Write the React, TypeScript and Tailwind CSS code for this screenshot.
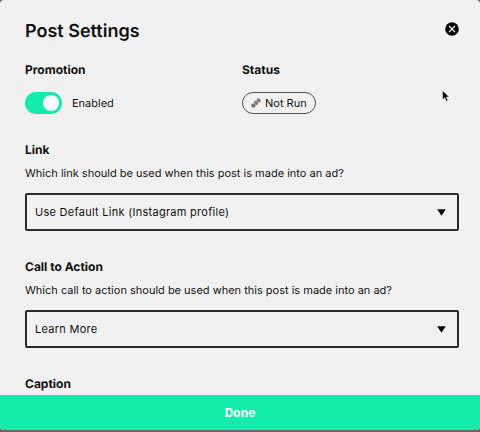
import { useState, type ReactNode } from "react";

const LINK_OPTIONS = ["Use Default Link (Instagram profile)", "Use Custom Link"];
const CTA_OPTIONS = ["Learn More", "Shop Now", "Sign Up"];

type SelectFieldProps = {
  id: string;
  label: string;
  hint: string;
  options: string[];
};

function Heading({ children }: { children: ReactNode }) {
  return <h2 className="text-[12px] leading-4 font-bold">{children}</h2>;
}

function SelectField({ id, label, hint, options }: SelectFieldProps) {
  const [value, setValue] = useState(options[0]);

  return (
    <section className="flex flex-col">
      <label htmlFor={id} className="text-[12px] leading-4 font-bold">
        {label}
      </label>
      <p className="mt-[7px] text-[11px] leading-4">{hint}</p>
      <div className="mt-3 grid items-center">
        <select
          id={id}
          value={value}
          onChange={(e) => setValue(e.target.value)}
          className="col-start-1 row-start-1 h-[38px] w-full appearance-none rounded-xs border-2 border-[#2b2b2b] bg-transparent pr-8 pl-2 text-[11px] tracking-wide"
        >
          {options.map((option) => (
            <option key={option}>{option}</option>
          ))}
        </select>
        <svg
          viewBox="0 0 9 7"
          className="pointer-events-none col-start-1 row-start-1 mr-[13px] h-[7px] w-[9px] justify-self-end"
          aria-hidden="true"
        >
          <path d="M.2.2h8.6L4.5 6.8z" fill="#0a0a0a" />
        </svg>
      </div>
    </section>
  );
}

function Pointer() {
  return (
    <svg
      viewBox="0 0 8 13"
      className="pointer-events-none absolute top-[90px] left-[442px] h-[13px] w-2"
      aria-hidden="true"
    >
      <path
        d="M.5.5v9.2l2.2-2 1.5 3.6 1.7-.7-1.5-3.5h2.9z"
        fill="#0a0a0a"
        stroke="#ffffff"
        strokeWidth=".5"
      />
    </svg>
  );
}

export default function App() {
  const [enabled, setEnabled] = useState(true);

  return (
    <div className="h-screen bg-[#666666] pb-[2px] font-['Inter',sans-serif] text-[#111111] [text-rendering:geometricPrecision]">
      <main className="relative flex h-full flex-col overflow-hidden rounded-sm bg-[#f1f1f1]">
        <div className="min-h-0 flex-1 overflow-hidden pt-5 pr-[21px] pl-[25px]">
          <header className="flex items-start justify-between">
            <h1 className="text-[18px] leading-6 font-semibold">Post Settings</h1>
            <button type="button" aria-label="Close" className="mt-[2px]">
              <svg viewBox="0 0 14 14" className="size-[14px]" aria-hidden="true">
                <circle cx="7" cy="7" r="6.8" fill="#0a0a0a" />
                <path d="M4 4l6 6M10 4l-6 6" stroke="#f1f1f1" strokeWidth="1.1" />
              </svg>
            </button>
          </header>

          <div className="mt-[18px] grid grid-cols-2">
            <section>
              <Heading>Promotion</Heading>
              <label className="mt-[14px] flex h-[22px] items-center gap-[10px] text-[11px]">
                <input
                  type="checkbox"
                  role="switch"
                  checked={enabled}
                  onChange={(e) => setEnabled(e.target.checked)}
                  className="flex h-[22px] w-[37px] appearance-none items-center rounded-full bg-[#b5b5b5] px-[3px] before:size-4 before:rounded-full before:bg-white checked:justify-end checked:bg-[#13edab]"
                />
                Enabled
              </label>
            </section>
            <section>
              <Heading>Status</Heading>
              <div className="mt-[14px] flex h-[22px] w-fit items-center gap-1 rounded-full border border-[#555555] px-2 text-[11px]">
                <svg viewBox="0 0 10 10" className="size-[10px]" aria-hidden="true">
                  <g fill="#777777" stroke="#f1f1f1" strokeWidth=".4">
                    <circle cx="7.6" cy="2.4" r="2.2" />
                    <circle cx="5" cy="5" r="2.4" />
                    <circle cx="2.4" cy="7.6" r="2.4" />
                  </g>
                </svg>
                Not Run
              </div>
            </section>
          </div>

          <div className="mt-7 flex flex-col gap-7">
            <SelectField
              id="link"
              label="Link"
              hint="Which link should be used when this post is made into an ad?"
              options={LINK_OPTIONS}
            />
            <SelectField
              id="cta"
              label="Call to Action"
              hint="Which call to action should be used when this post is made into an ad?"
              options={CTA_OPTIONS}
            />
            <section>
              <Heading>Caption</Heading>
            </section>
          </div>
        </div>

        <button
          type="button"
          className="h-[35px] shrink-0 bg-[#13edab] text-[12px] font-bold text-white"
        >
          Done
        </button>
        <Pointer />
      </main>
    </div>
  );
}
